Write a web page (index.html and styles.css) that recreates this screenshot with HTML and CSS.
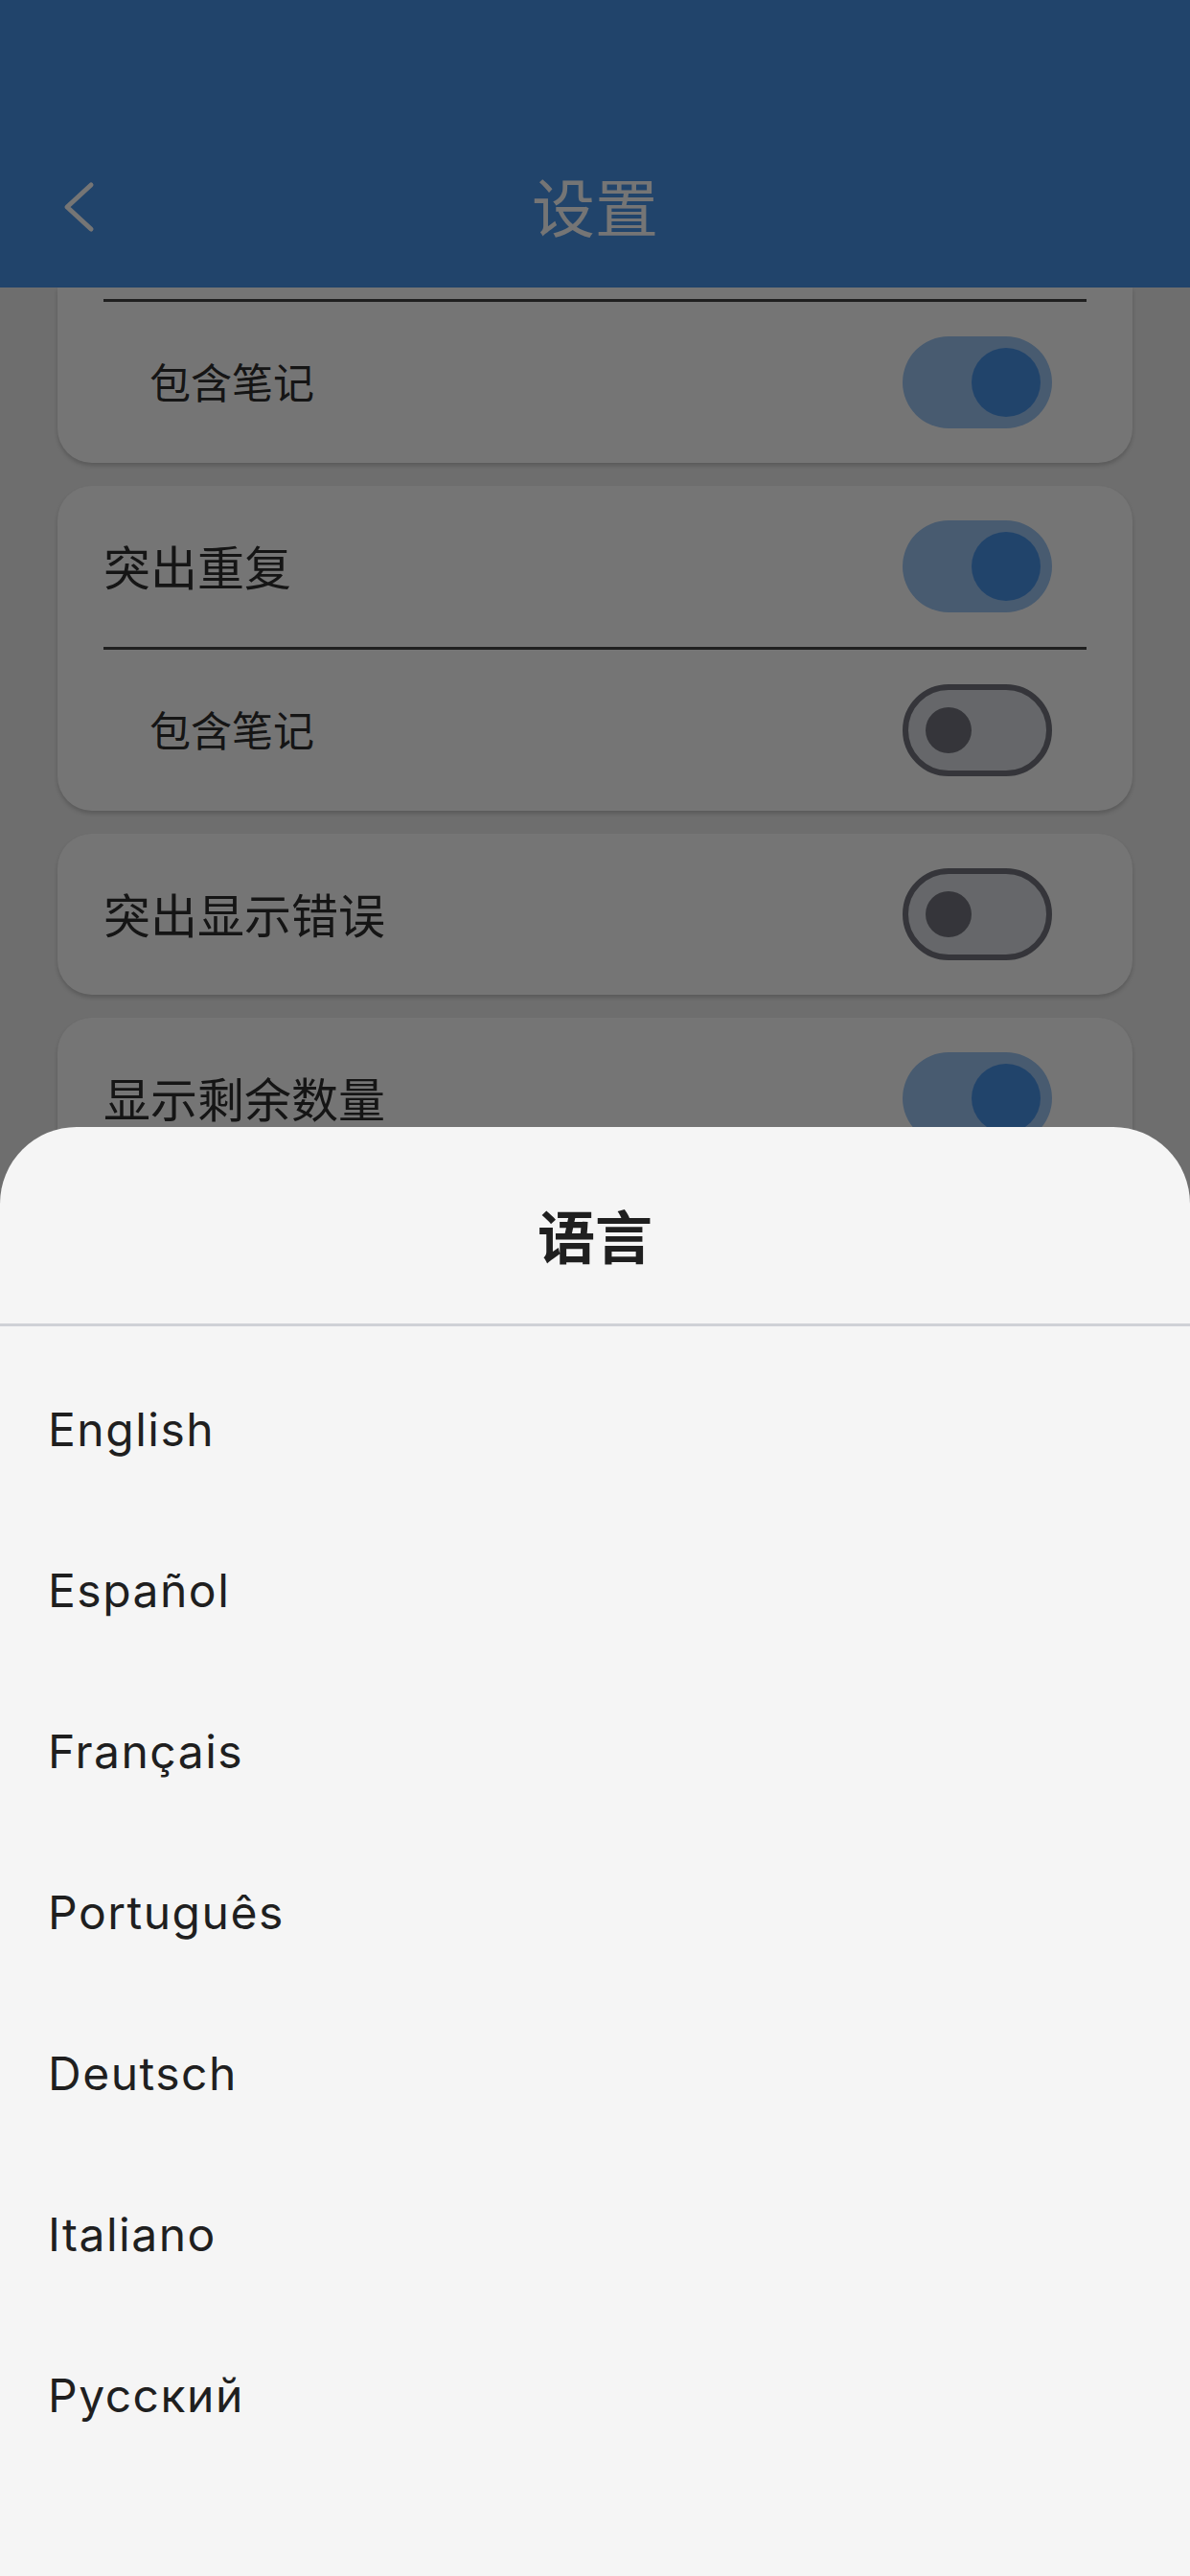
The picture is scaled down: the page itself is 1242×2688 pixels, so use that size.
FILE: index.html
```html
<!DOCTYPE html>
<html lang="zh-CN">
  <head>
    <meta charset="UTF-8" />
    <title>设置</title>
    <link rel="stylesheet" href="styles.css">
  </head>
  <body>
    <header class="app-bar">
      <div class="toolbar">
        <button class="back-btn" type="button">
          <svg viewBox="0 0 72 72" fill="none" stroke="#ffffff" stroke-width="5" stroke-linecap="round" stroke-linejoin="round">
            <path d="M47 13 L22 36 L47 59" />
          </svg>
        </button>
        <h1 class="toolbar-title">设置</h1>
        <span class="toolbar-spacer"></span>
      </div>
    </header>

    <main class="settings">
      <!-- first card is scrolled up under the app bar -->
      <section class="card card-clipped">
        <div class="divider"></div>
        <div class="row row-sub">
          <span>包含笔记</span>
          <span class="switch on"><span class="thumb"></span></span>
        </div>
      </section>

      <section class="card">
        <div class="row">
          <span>突出重复</span>
          <span class="switch on"><span class="thumb"></span></span>
        </div>
        <div class="divider"></div>
        <div class="row row-sub">
          <span>包含笔记</span>
          <span class="switch off"><span class="thumb"></span></span>
        </div>
      </section>

      <section class="card">
        <div class="row">
          <span>突出显示错误</span>
          <span class="switch off"><span class="thumb"></span></span>
        </div>
      </section>

      <section class="card">
        <div class="row">
          <span>显示剩余数量</span>
          <span class="switch on"><span class="thumb"></span></span>
        </div>
      </section>
    </main>

    <div class="scrim"></div>

    <div class="sheet">
      <h2 class="sheet-title">语言</h2>
      <ul class="lang-list">
        <li>English</li>
        <li>Español</li>
        <li>Français</li>
        <li>Português</li>
        <li>Deutsch</li>
        <li>Italiano</li>
        <li>Русский</li>
      </ul>
    </div>
  </body>
</html>
```

FILE: styles.css
```css
* {
  box-sizing: border-box;
}

body {
  margin: 0;
  width: 1242px;
  height: 2688px;
  overflow: hidden;
  background-color: #efefef;
  font-family: Inter, "Noto Sans CJK SC", sans-serif;
}

/* app bar (status bar area + toolbar) */
.app-bar {
  height: 300px;
  padding-top: 132px;
  background-color: #4894ea;
}

.toolbar {
  height: 168px;
  display: flex;
  align-items: center;
}

.back-btn {
  width: 168px;
  height: 168px;
  padding: 0;
  border: none;
  background: none;
  display: flex;
  align-items: center;
  justify-content: center;
}

.back-btn svg {
  width: 72px;
  height: 72px;
}

.toolbar-title {
  flex: 1;
  margin: 0;
  padding-bottom: 6px;
  text-align: center;
  color: #ffffff;
  font-family: "Noto Sans CJK SC", sans-serif;
  font-size: 66px;
  font-weight: 400;
}

.toolbar-spacer {
  width: 168px;
}

/* settings cards */
.settings {
  padding: 0 60px;
  display: flex;
  flex-direction: column;
  gap: 24px;
}

.card {
  background-color: #ffffff;
  border-radius: 36px;
  box-shadow: 0 3px 4px rgba(0, 0, 0, 0.18);
}

.card-clipped {
  border-radius: 0 0 36px 36px;
  padding-top: 12px;
}

.row {
  height: 168px;
  padding: 0 84px 0 48px;
  display: flex;
  align-items: center;
  justify-content: space-between;
  color: #2e2e2e;
  font-family: "Noto Sans CJK SC", sans-serif;
  font-size: 49px;
}

.row > span:first-child {
  padding-bottom: 4px;
}

.row-sub {
  padding-left: 96px;
  font-size: 43px;
}

.divider {
  height: 3px;
  margin: 0 48px;
  background-color: #444;
}

/* toggle switch */
.switch {
  flex-shrink: 0;
  width: 156px;
  height: 96px;
  border-radius: 48px;
  display: flex;
  align-items: center;
}

.switch .thumb {
  border-radius: 50%;
}

.switch.on {
  justify-content: flex-end;
  padding-right: 12px;
  background-color: #9dc6f3;
}

.switch.on .thumb {
  width: 72px;
  height: 72px;
  background-color: #4894ea;
}

.switch.off {
  padding-left: 18px;
  background-color: #dee0e6;
  border: 6px solid #73757e;
}

.switch.off .thumb {
  width: 48px;
  height: 48px;
  background-color: #73757e;
}

/* modal bottom sheet */
.scrim {
  position: fixed;
  inset: 0;
  background-color: rgba(0, 0, 0, 0.54);
}

.sheet {
  position: fixed;
  left: 0;
  right: 0;
  bottom: 0;
  height: 1512px;
  background-color: #f5f5f5;
  border-radius: 80px 80px 0 0;
}

.sheet-title {
  margin: 0;
  padding: 70px 0 51px;
  line-height: 84px;
  text-align: center;
  color: #1f1f1f;
  font-family: "Noto Sans CJK SC", sans-serif;
  font-size: 60px;
  font-weight: 700;
  border-bottom: 3px solid #cfd1d6;
}

.lang-list {
  list-style: none;
  margin: 0;
  padding: 24px 0 0;
}

.lang-list li {
  height: 168px;
  line-height: 168px;
  padding-left: 50px;
  color: #1f1f1f;
  font-size: 48px;
  letter-spacing: 1.5px;
}
```
